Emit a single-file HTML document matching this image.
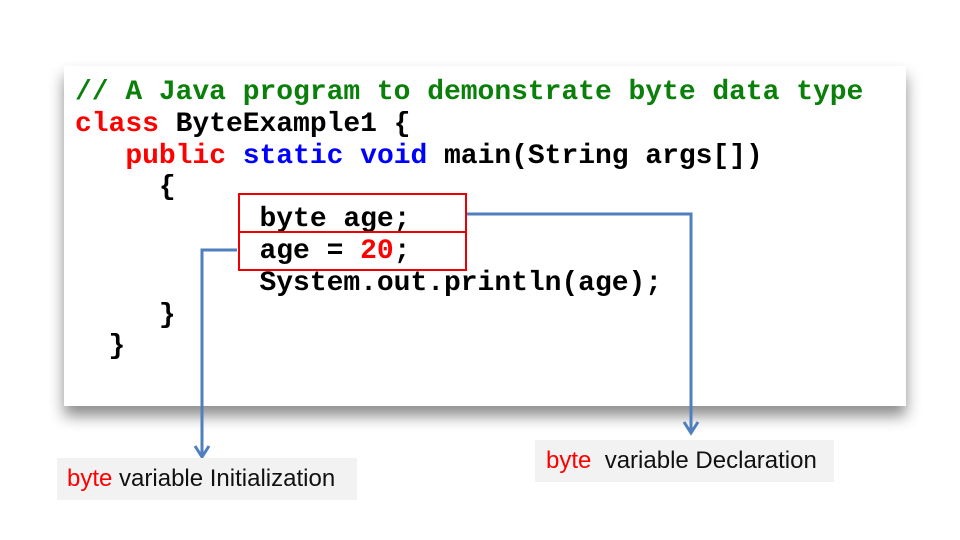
<!DOCTYPE html>
<html><head><style>
body{margin:0;width:960px;height:540px;background:#fff;position:relative;overflow:hidden;font-family:"Liberation Sans",sans-serif}
.box{position:absolute;left:64px;top:66px;width:842px;height:340px;background:#fff;box-shadow:0 10px 14px rgba(0,0,0,0.45)}
pre{position:absolute;left:75px;top:77px;margin:0;font:bold 28px/31.8px "Liberation Mono",monospace;color:#000;letter-spacing:-0.03px}
.g{color:#0a800a}.r{color:#f00}.b{color:#00f}
.rb{position:absolute;left:238px;width:225px;border:2px solid #e00}
.lab{position:absolute;background:#f2f2f2;font-size:24px;color:#111;font-family:"Liberation Sans",sans-serif;white-space:nowrap}
</style></head><body>
<div class="box"></div>
<pre><span class="g">// A Java program to demonstrate byte data type</span>
<span class="r">class</span> ByteExample1 {
   <span class="r">public</span> <span class="b">static</span> <span class="b">void</span> main(String args[])
     {
           byte age;
           age = <span class="r">20</span>;
           System.out.println(age);
     }
  }</pre>
<div class="rb" style="top:193px;height:36px"></div>
<div class="rb" style="top:231px;height:36px"></div>
<svg width="960" height="540" style="position:absolute;left:0;top:0">
<g stroke="#4f7fbd" stroke-width="3" fill="none">
<polyline points="467,214 691,214 691,432"/>
<polyline points="684,422 691,433 698,422"/>
<polyline points="237,250 202,250 202,456"/>
<polyline points="195,446 202,457 209,446"/>
</g></svg>
<div class="lab" style="left:57px;top:458px;width:300px;height:42px;line-height:42px;padding-left:10px;box-sizing:border-box"><span style="color:#f00">byte</span> variable Initialization</div>
<div class="lab" style="left:535px;top:440px;width:299px;height:42px;line-height:42px;padding-left:11px;box-sizing:border-box"><span style="color:#f00">byte</span>&nbsp; variable Declaration</div>
</body></html>
